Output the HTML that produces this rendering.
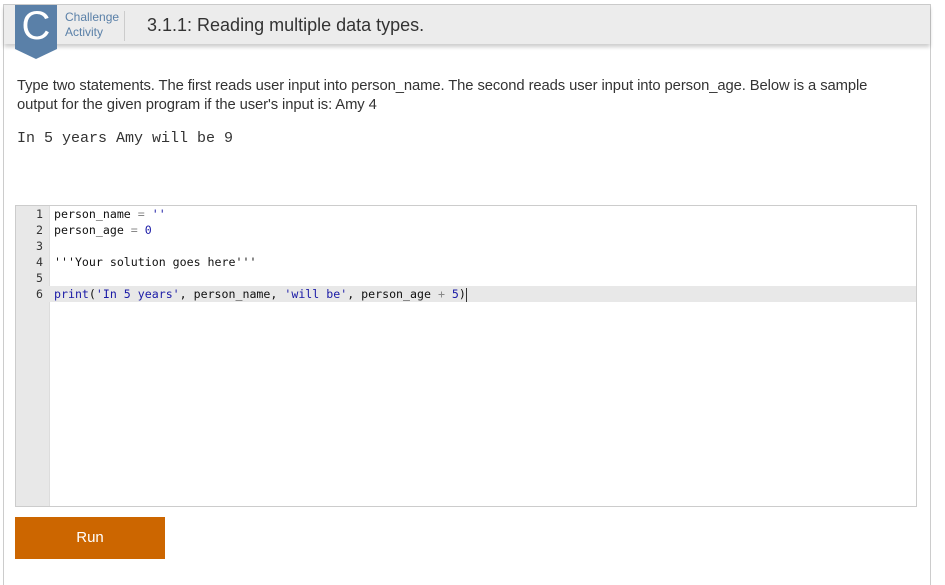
<!DOCTYPE html>
<html><head><style>
body{margin:0;background:#fff;width:945px;height:570px;overflow:hidden;font-family:"Liberation Sans",Arial,sans-serif;}
.card{position:absolute;left:3px;top:4px;width:926px;height:580px;border:1px solid #ccc;border-bottom:none;}
.hdr{position:absolute;left:0;top:0;width:926px;height:39px;background:#ececec;box-shadow:0 3px 4px rgba(0,0,0,.2);}
.badge{position:absolute;left:11px;top:0;width:42px;height:44px;background:#5a80a8;color:#fff;font-size:40px;line-height:42px;text-align:center;}
.badge:after{content:"";position:absolute;left:0;top:44px;border-left:21px solid transparent;border-right:21px solid transparent;border-top:10px solid #5a80a8;}
.lbl{position:absolute;left:61px;top:5px;color:#5a80a8;font-size:12px;line-height:15px;}
.sep{position:absolute;left:120px;top:6px;width:1px;height:30px;background:#ccc;}
.ttl{position:absolute;left:143px;top:10px;font-size:18px;color:#333;}
.desc{position:absolute;left:17px;top:77px;width:875px;font-size:14.8px;line-height:19px;color:#333;letter-spacing:-0.1px;}
.out{position:absolute;left:17px;top:131px;font-family:"Liberation Mono",monospace;font-size:15px;line-height:16px;color:#333;}
.ed{position:absolute;left:15px;top:205px;width:900px;height:300px;border:1px solid #ccc;background:#fff;}
.gut{position:absolute;left:0;top:0;width:33px;height:300px;background:#e8e8e8;border-right:1px solid #ddd;}
.ln{position:absolute;left:0;width:900px;height:16px;font-family:"DejaVu Sans Mono",monospace;font-size:11.6px;line-height:16px;}
.ln .n{position:absolute;left:0;width:27px;text-align:right;color:#333;}
.ln .c{position:absolute;left:38px;color:#111;white-space:pre;}
.s{color:#1a1aa6}.o{color:#888}
.cur{display:inline-block;width:1px;height:14px;background:#333;vertical-align:middle;}
.run{position:absolute;left:15px;top:517px;width:150px;height:42px;background:#cc6600;color:#fff;font-size:15px;line-height:42px;text-align:center;}
</style></head><body>
<div class="card">
<div class="hdr"></div>
<div class="badge">C</div>
<div class="lbl">Challenge<br>Activity</div>
<div class="sep"></div>
<div class="ttl">3.1.1: Reading multiple data types.</div>
</div>
<div class="desc">Type two statements. The first reads user input into person_name. The second reads user input into person_age. Below is a sample output for the given program if the user's input is: Amy 4</div>
<div class="out">In 5 years Amy will be 9</div>
<div class="ed"><div class="gut"></div>
<div class="ln" style="top:0"><span class="n">1</span><span class="c">person_name <span class="o">=</span> <span class="s">''</span></span></div>
<div class="ln" style="top:16px"><span class="n">2</span><span class="c">person_age <span class="o">=</span> <span class="s">0</span></span></div>
<div class="ln" style="top:32px"><span class="n">3</span></div>
<div class="ln" style="top:48px"><span class="n">4</span><span class="c s">'''Your solution goes here'''</span></div>
<div class="ln" style="top:64px"><span class="n">5</span></div>
<div class="ln" style="top:80px;background:#e8e8e8;left:0"><span class="n">6</span><span class="c"><span class="s">print</span>(<span class="s">'In 5 years'</span>, person_name, <span class="s">'will be'</span>, person_age <span class="o">+</span> <span class="s">5</span>)<span class="cur"></span></span></div>
</div>
<div class="run">Run</div>
</body></html>
